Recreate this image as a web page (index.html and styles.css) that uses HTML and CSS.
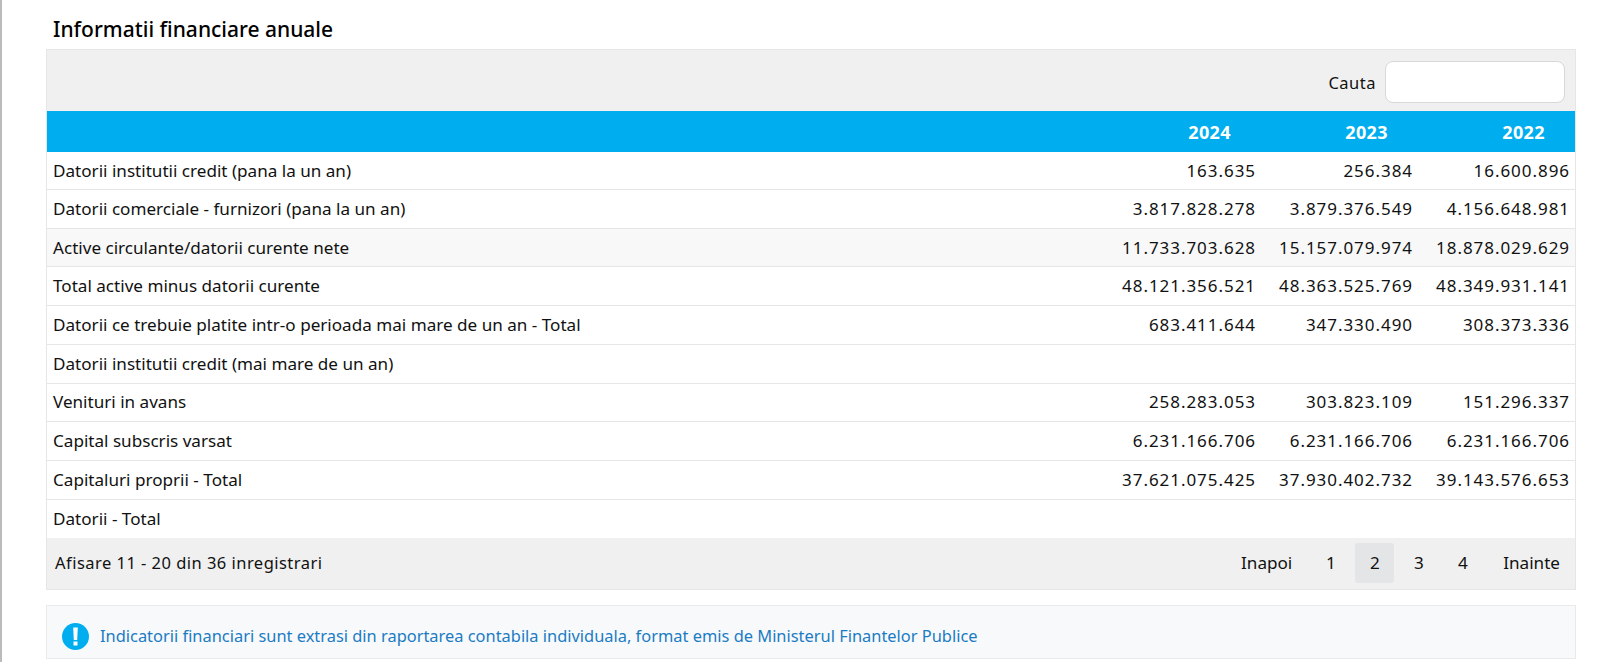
FILE: index.html
```html
<!DOCTYPE html>
<html lang="ro">
<head>
<meta charset="utf-8">
<title>Informatii financiare anuale</title>
<link rel="stylesheet" href="styles.css">
</head>
<body>
<main class="content">
<h2 class="title">Informatii financiare anuale</h2>
<section class="panel">
<div class="toolbar"><label class="search"><span class="search-label">Cauta</span> <input class="search-input" type="text"></label></div>
<table class="data">
<thead><tr><th></th><th>2024</th><th>2023</th><th>2022</th></tr></thead>
<tbody>
<tr class="first"><td>Datorii institutii credit (pana la un an)</td><td>163.635</td><td>256.384</td><td>16.600.896</td></tr>
<tr><td>Datorii comerciale - furnizori (pana la un an)</td><td>3.817.828.278</td><td>3.879.376.549</td><td>4.156.648.981</td></tr>
<tr class="alt"><td>Active circulante/datorii curente nete</td><td>11.733.703.628</td><td>15.157.079.974</td><td>18.878.029.629</td></tr>
<tr><td>Total active minus datorii curente</td><td>48.121.356.521</td><td>48.363.525.769</td><td>48.349.931.141</td></tr>
<tr><td>Datorii ce trebuie platite intr-o perioada mai mare de un an - Total</td><td>683.411.644</td><td>347.330.490</td><td>308.373.336</td></tr>
<tr><td>Datorii institutii credit (mai mare de un an)</td><td></td><td></td><td></td></tr>
<tr><td>Venituri in avans</td><td>258.283.053</td><td>303.823.109</td><td>151.296.337</td></tr>
<tr><td>Capital subscris varsat</td><td>6.231.166.706</td><td>6.231.166.706</td><td>6.231.166.706</td></tr>
<tr><td>Capitaluri proprii - Total</td><td>37.621.075.425</td><td>37.930.402.732</td><td>39.143.576.653</td></tr>
<tr><td>Datorii - Total</td><td></td><td></td><td></td></tr>
</tbody>
</table>
<div class="footer">
<span class="count">Afisare 11 - 20 din 36 inregistrari</span>
<nav class="pager"><a>Inapoi</a><a>1</a><a class="current">2</a><a>3</a><a>4</a><a>Inainte</a></nav>
</div>
</section>
<aside class="note">
<svg class="note-icon" viewBox="0 0 27 27" width="27" height="27" aria-hidden="true"><circle cx="13.5" cy="13.5" r="13.5" fill="#00aeef"/><path d="M11.2 4.5h4.6l-.6 12.5h-3.4z" fill="#fff"/><rect x="11.5" y="18.5" width="4" height="4" fill="#fff"/></svg>
<span>Indicatorii financiari sunt extrasi din raportarea contabila individuala, format emis de Ministerul Finantelor Publice</span>
</aside>
</main>
</body>
</html>
```
FILE: styles.css
```css
* { box-sizing: border-box; }
html, body { margin: 0; height: 100%; overflow: hidden; }
body { background: #fff; color: #111; font: 16.5px/24px "Noto Sans", sans-serif; border-left: 2px solid #bbb; }
.content { width: 1530px; margin-left: 44px; }
.title { margin: 0; height: 49px; padding: 15px 7px 0; font-size: 21px; line-height: 28px; font-weight: 500; color: #000; }
.panel { border: 1px solid #e6e6e6; }
.toolbar { height: 61px; background: #f0f0f0; padding: 11px 10px 0 0; display: flex; justify-content: flex-end; }
.search { display: flex; align-items: center; gap: 9px; height: 42px; letter-spacing: .5px; }
.search-label { margin-top: 2px; }
.search-input { width: 180px; height: 42px; border: 1px solid #d8d8d8; border-radius: 8px; background: #fff; }
.data { width: 100%; border-collapse: collapse; table-layout: fixed; }
.data th:nth-child(n+2) { width: 157px; }
.data th { background: #00aeef; color: #fff; height: 41px; padding: 0 30px 0 6px; text-align: right; font-size: 18px; font-weight: 700; letter-spacing: .4px; }
.data td { height: 38.7px; padding: 0 5px 0 6px; border-bottom: 1px solid #e6e6e6; text-align: right; font-size: 17px; letter-spacing: .95px; }
.data td:first-child { text-align: left; font-size: 17.1px; letter-spacing: 0; }
.data .first td { height: 37.6px; }
.data tr:last-child td { border-bottom: 0; }
.alt td { background: #f8f8f8; }
.footer { height: 51px; background: #f0f0f0; display: flex; align-items: center; justify-content: space-between; padding: 0 1px 0 8px; }
.count { letter-spacing: .47px; }
.pager { display: flex; align-items: center; gap: 5px; font-size: 17.1px; }
.pager a { height: 40px; min-width: 39px; line-height: 40px; padding: 0 14px; border-radius: 3px; text-align: center; }
.pager a:last-child { margin-left: 2px; }
.pager .current { background: #e4e5e7; }
.note { margin-top: 15px; height: 54px; width: 1530px; border: 1px solid #e8eaec; background: #f8f9fa; display: flex; align-items: center; gap: 11px; padding: 9px 15px 0; font-size: 16.42px; color: #1b7cc4; }
```
